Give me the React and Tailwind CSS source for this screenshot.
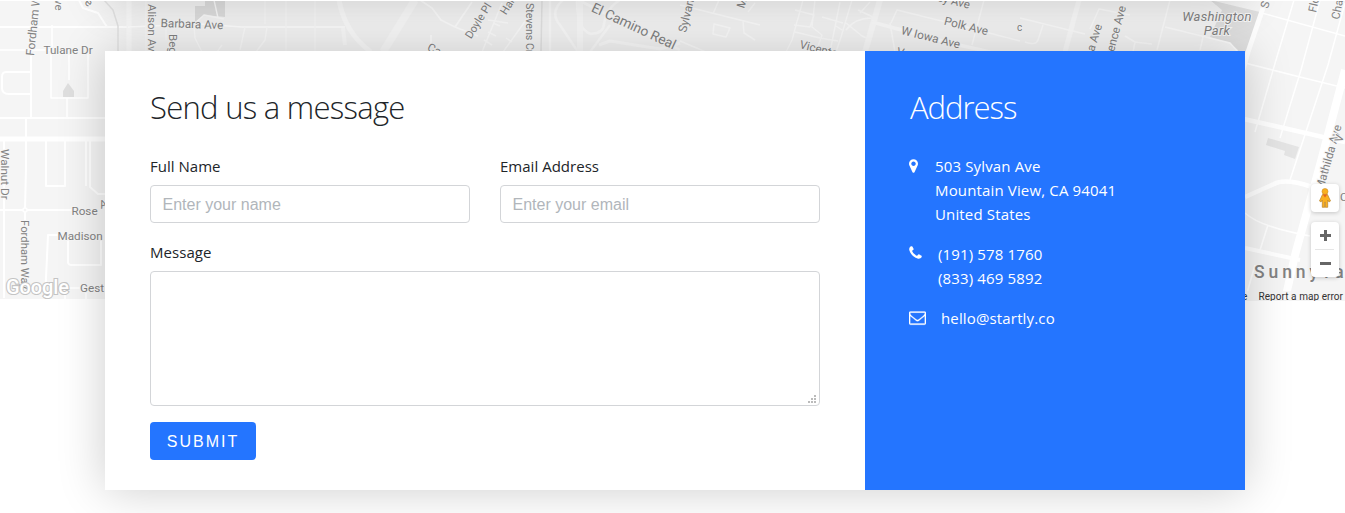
import React from "react";

const roads = [
  // west side
  ["M-2 27H128", 2, "#fff"],
  ["M0 118H105", 2, "#fff"],
  ["M0 139H108", 5, "#fff"],
  ["M0 210H72", 2, "#fff"],
  ["M0 300H105", 2, "#fff"],
  ["M31 50V117", 2, "#fff"],
  ["M26 118V168L25 210V220", 2, "#fff"],
  ["M4 140V298", 2, "#fff"],
  ["M0 50H52V25", 1.5, "#fff"],
  ["M30 72H6Q2 72 2 77V88Q2 94 9 94H30", 2, "#fff"],
  ["M51 50V98H88V50M69 50V80M67 98V118", 1.5, "#fff"],
  ["M46 140V186H65V140", 2, "#fff"],
  ["M86 140V186M90 140V187L98 194H105", 2, "#fff"],
  ["M62 235H48L45 300M68 240V262Q68 265 72 265H101V240", 2, "#fff"],
  ["M60 288H80M65 288V300M86 290V300", 1.5, "#fff"],
  ["M79 0L83 8L98 13L107 27", 2, "#fff"],
  ["M104 0L113 10L118 26V52", 1.5, "#e2e2e2"],
  ["M129 0V52", 5, "#fafafa"],
  ["M128 27L200 24L242 27H345", 1.4, "#fff"],
  ["M146 0V52M166 27V40M286 0V52M315 0V52M265 0V24", 1.4, "#f9f9f9"],
  ["M194 24L204 15L224 19M214 0L218 18M194 26L195 38L202 52M245 27L240 50M267 27L265 40L256 52M222 45L217 52", 1.4, "#fbfbfb"],
  // centre
  ["M339 0Q345 33 371 52", 5, "#fbfbfb"],
  ["M415 0L383 52", 8, "#fafafa"],
  ["M343 28L345 45", 4, "#fafafa"],
  ["M420 0L432 8L441 20L455 27L478 36M455 27L472 2M431 35V44L440 52", 1.8, "#fdfdfd"],
  ["M502 3L482 52M488 20L508 23M526 20L503 52M493 23L500 26M488 32L496 36M484 40L492 45M512 42L506 38", 1.5, "#fcfcfc"],
  ["M542 0L541 52", 1.5, "#e3e3e3"],
  ["M563 0Q549 12 560 25L578 52M620 0Q606 8 604 24Q604 33 591 34Q577 30 577 0M610 25L590 52M550 0V52", 2.5, "#fbfbfb"],
  ["M580 0V52", 6, "#fafafa"],
  ["M578 0L680 50M599 45L610 41L660 49L680 43", 3, "#fbfbfb"],
  ["M680 5L760 25M719 0L713 14M743 21L744 33L755 40M755 3L748 12M680 41L706 52M714 24L730 28L726 37L713 34Z", 1.5, "#fcfcfc"],
  ["M803 0L792 40L786 52M795 10L814 15L810 27L794 25M815 0L812 27L822 35L816 52M795 32L820 38L838 41M840 2L830 52M852 0L841 37L836 52M822 17L843 23M836 26L842 30", 1.4, "#fcfcfc"],
  ["M846 23L862 36L871 40M846 30Q855 18 872 18M858 10L875 18M860 13L870 2", 1.6, "#fcfcfc"],
  ["M880 0L865 52", 6, "#fbfbfb"],
  ["M872 22L950 43L990 52", 3.5, "#fcfcfc"],
  ["M891 23L897 10L970 28L1020 41M984 0L972 45M890 23L895 52", 1.5, "#fcfcfc"],
  // east
  ["M1079 0L1065 52", 5, "#fbfbfb"],
  ["M1020 18L1085 34M1043 25L1038 40Q1036 46 1025 42", 1.5, "#fcfcfc"],
  ["M1090 29L1099 9L1130 15M1125 36L1135 42L1133 52M1170 0L1157 50M1165 27L1230 43L1238 52M1203 37L1200 50M1134 42L1152 44", 1.5, "#fcfcfc"],
  ["M1263 8L1248 52L1235 98", 5, "#fff"],
  ["M1262 13L1345 36M1294 0L1276 60L1255 132M1320 0L1301 70L1280 138M1345 3L1328 65L1290 180", 1.5, "#fff"],
  ["M1245 63L1300 77L1345 88", 1.6, "#fff"],
  ["M1235 117L1288 129L1345 142", 4.5, "#fff"],
  ["M1245 197L1274 184Q1285 178 1312 187", 4.5, "#fff"],
  ["M1245 213Q1260 227 1310 236M1268 225L1260 250M1255 265L1245 300", 1.6, "#fff"],
  ["M1245 248L1300 260", 4, "#fff"],
  ["M1345 70L1320 165L1295 255L1285 300", 8, "#fff"],
];

const labels = [
  ["Fordham W", 34, 56, -84, 11.7],
  ["ve", 55, -1, 90, 11.5],
  ["e", 84, 3, 45, 11.5],
  ["Tulane Dr", 43.5, 53.5, 0, 11.7],
  ["Alison Av", 148, 4, 90, 11.5],
  ["Barbara Ave", 160.5, 27, 2, 11.7],
  ["Beg", 169, 34, 90, 11.5],
  ["Walnut Dr", 0.5, 149, 90, 11.7],
  ["Rose", 71.5, 214.5, 0, 11.7],
  ["A", 101, 209, -20, 11.5],
  ["Fordham Way", 21, 220, 90, 11.3],
  ["Madison", 57.5, 239.5, 0, 11.7],
  ["Gest", 80, 292, 0, 11.7],
  ["Doyle Pl", 471, 39.5, -58, 11],
  ["Harr", 506, 15.5, -58, 11],
  ["Ca", 426.5, 50, 25, 11.5],
  ["Stevens Cr", 526, 3, 90, 10.6],
  ["El Camino Real", 590.5, 11, 25, 13.7],
  ["Sylvan", 686, 33, -76, 11.7],
  ["M", 744, 9, -72, 11.5],
  ["c", 1017, 31, 0, 10],
  ["Vicente", 799, 48, 14, 11.5],
  ["ley Ave", 934, 0, 14, 11.5],
  ["Polk Ave", 943.5, 24.500, 14, 11.7],
  ["W Iowa Ave", 900.5, 34, 14, 11.7],
  ["V", 896, 55, 14, 11.5],
  ["a Ave", 1094, 52, -73, 11.5],
  ["rence Ave", 1113, 56, -75, 11.7],
  ["S", 1268, 9, -75, 11.5],
  ["Flo", 1316, 13, -78, 11.5],
  ["Char", 1339, 20, -78, 11.5],
  ["Mathilda Ave", 1323, 191, -74, 11.7],
  ["V", 1342, 143, -74, 11.5],
  ["C", 1340, 201, 0, 11.5],
];

function StreetMap() {
  return (
    <svg className="block" width="1345" height="300" viewBox="0 1 1345 300">
      <rect width="1345" height="301" fill="#f5f5f5" />
      <path d="M195 0H225V17L205 15L195 22V6H205V0Z" fill="#dfdfdf" />
      <path d="M1210 0L1260 12L1247 60H1225L1238 50L1230 43L1210 37L1222 10Z" fill="#e0e0e0" />
      <path d="M63 97V91L68 83L74 91V97Z" fill="#dfdfdf" />
      <path d="M1268 138L1299 147L1295 159L1284 155L1285 151L1266 145Z" fill="#e4e4e4" />
      <g fill="none" strokeLinejoin="round">
        {roads.map(([d, w, c], i) => (
          <path key={i} d={d} strokeWidth={w} stroke={c} />
        ))}
        <circle cx="25" cy="210" r="2" fill="#f5f5f5" stroke="#fff" strokeWidth="1.5" />
      </g>
      <g
        className="font-['Roboto',sans-serif]"
        fill="#828282"
        stroke="#f7f7f7"
        strokeWidth="2"
        paintOrder="stroke"
      >
        {labels.map(([t, x, y, r, s], i) => (
          <text key={i} fontSize={s} transform={`translate(${x} ${y}) rotate(${r})`}>
            {t}
          </text>
        ))}
        <g fontStyle="italic" fontSize="13" textAnchor="middle" letterSpacing="0.3">
          <text x="1217" y="21">Washington</text>
          <text x="1217" y="35">Park</text>
        </g>
        <text x="1254" y="278" fontSize="17.500" letterSpacing="3.900" fontWeight="500">
          Sunnyvale
        </text>
      </g>
      <rect x="1180" y="291" width="165" height="10" fill="#f5f5f5" fillOpacity="0.7" />
      <g className="font-['Roboto',sans-serif]" fontSize="10" fill="#333">
        <text x="1242" y="300">e</text>
        <text x="1258.500" y="300" textLength="84.500">
          Report a map error
        </text>
      </g>
      <text
        className="font-['Roboto',sans-serif]"
        x="6"
        y="294"
        fontSize="20"
        fontWeight="500"
        textLength="63"
        fill="#fff"
        stroke="#c4c4c4"
        strokeWidth="2.200"
        paintOrder="stroke"
      >
        Google
      </text>
    </svg>
  );
}

function MapControls() {
  return (
    <div className="absolute left-[1311px] top-[183px] flex w-7 flex-col gap-[10px]">
      <div className="flex h-7 items-center justify-center rounded-sm bg-white shadow-[0_1px_4px_rgba(0,0,0,0.2)]">
        <svg width="14" height="20" viewBox="0 0 14 20">
          <path
            d="M4.500 6.500H9.500L12.500 13L11 14L9.700 12V19.300H7.300V14H6.700V19.300H4.300V12L3 14L1.500 13Z"
            fill="#fbb01f"
            stroke="#b9832a"
            strokeWidth="0.7"
          />
          <circle cx="7" cy="3.500" r="3" fill="#fbb01f" stroke="#c98f2d" strokeWidth="0.6" />
          <path d="M4.800 6.400H9.200L7 9.500Z" fill="#e9631a" />
        </svg>
      </div>
      <div className="flex h-[55px] flex-col items-center rounded-sm bg-white shadow-[0_1px_4px_rgba(0,0,0,0.2)]">
        <svg width="28" height="55" viewBox="0 0 28 55">
          <path d="M9 13.500H20M14.500 8V19M9 41.500H20" stroke="#666" strokeWidth="3" />
          <path d="M4 27.500H23" stroke="#e6e6e6" />
        </svg>
      </div>
    </div>
  );
}

function PinIcon() {
  return (
    <svg className="mt-1 block h-4 w-[9px] shrink-0" viewBox="0 0 1024 1792" fill="currentColor">
      <path d="M768 640q0-106-75-181t-181-75-181 75-75 181 75 181 181 75 181-75 75-181zm256 0q0 109-33 179l-364 774q-16 33-47.500 52t-67.500 19-67.500-19-46.500-52l-365-774q-33-70-33-179 0-212 150-362t362-150 362 150 150 362z" />
    </svg>
  );
}

function PhoneIcon() {
  return (
    <svg className="mt-[3px] block h-4 w-[13px] shrink-0" viewBox="0 0 1408 1792" fill="currentColor">
      <path d="M1408 1240q0 27-10 70.500t-21 68.500q-21 50-122 106-94 51-186 51-27 0-53-3.500t-57.500-12.500-47-14.500-55.500-20.500-49-18q-98-35-175-83-127-79-264-216t-216-264q-48-77-83-175-3-9-18-49t-20.500-55.500-14.500-47-12.500-57.500-3.500-53q0-92 51-186 56-101 106-122 25-11 68.500-21t70.500-10q14 0 21 3 18 6 53 76 11 19 30 54t35 63.500 31 53.500q3 4 17.500 25t21.500 35.500 7 28.500q0 20-28.500 50t-62 55-62 53-28.500 46q0 9 5 22.500t8.500 20.500 14 24 11.500 19q76 137 174 235t235 174q2 1 19 11.500t24 14 20.500 8.500 22.500 5q18 0 46-28.500t53-62 55-62 50-28.500q14 0 28.500 7t35.500 21.500 25 17.500q25 15 53.500 31t63.500 35 54 30q70 35 76 53 3 7 3 21z" />
    </svg>
  );
}

function EnvelopeIcon() {
  return (
    <svg className="mt-[3px] block h-[17px] w-[17px] shrink-0" viewBox="0 0 1792 1792" fill="currentColor" stroke="currentColor" strokeWidth="25">
      <path d="M1664 1504v-768q-32 36-69 66-268 206-426 338-51 43-83 67t-86.500 48.500-102.500 24.500h-2q-48 0-102.500-24.500t-86.500-48.500-83-67q-158-132-426-338-37-30-69-66v768q0 13 9.500 22.500t22.500 9.500h1472q13 0 22.500-9.500t9.500-22.500zm0-1051v-24.500l-.5-13-3-12.500-5.500-9-9-7.500-14-2.500h-1472q-13 0-22.500 9.500t-9.500 22.500q0 168 147 284 193 152 401 317 6 5 35 29.500t46 37.500 44.500 31.500 50.500 27.500 43 9h2q20 0 43-9t50.500-27.500 44.500-31.500 46-37.500 35-29.500q208-165 401-317 54-43 100.500-115.500t46.500-131.500zm128-37v1088q0 66-47 113t-113 47h-1472q-66 0-113-47t-47-113v-1088q0-66 47-113t113-47h1472q66 0 113 47t47 113z" />
    </svg>
  );
}

function Field({ label, placeholder }) {
  return (
    <label className="block w-80">
      <span className="block h-6 leading-6 tracking-[0.02px]">{label}</span>
      <input
        className="mt-[7px] block h-[38px] w-full rounded border border-[#d3d5d8] bg-white pl-[11.5px] pr-3 pt-[2px] font-['Liberation_Sans',sans-serif] text-base placeholder:text-[#b1b6bb]"
        placeholder={placeholder}
      />
    </label>
  );
}

export default function App() {
  return (
    <div className="relative h-[513px] w-[1345px] overflow-hidden bg-white font-['Open_Sans',sans-serif] text-[15px] text-[#212529]">
      <div className="absolute left-0 top-px h-[300px] w-full overflow-hidden">
        <StreetMap />
        <div className="absolute -top-10 left-[105px] h-10 w-[1140px] shadow-[0_0_45px_rgba(0,0,0,0.2)]" />
        <MapControls />
      </div>

      <div className="relative ml-[105px] mt-[51px] flex h-[439px] w-[1140px] bg-white shadow-[0_0_45px_rgba(0,0,0,0.2)]">
        <form className="w-[760px] px-[45px] pt-9">
          <h2 className="h-10 whitespace-nowrap text-[31px] font-light leading-10 tracking-[-0.72px]">Send us a message</h2>
          <div className="mt-[27px] flex justify-between">
            <Field label="Full Name" placeholder="Enter your name" />
            <Field label="Email Address" placeholder="Enter your email" />
          </div>
          <label className="relative mt-[17px] block">
            <span className="block h-6 leading-6 tracking-[0.05px]">Message</span>
            <textarea className="mt-[7px] block h-[135px] w-full resize-none rounded border border-[#d3d5d8] bg-white" />
            <svg className="absolute bottom-[3px] right-1" width="8" height="8" fill="#bbb">
              <path d="M0 6h2v2H0zM3 6h2v2H3zM6 6h2v2H6zM3 3h2v2H3zM6 3h2v2H6zM6 0h2v2H6z" />
            </svg>
          </label>
          <button
            type="button"
            className="mt-4 block h-[38px] w-[106px] rounded bg-[#2475ff] pt-[2px] font-['Liberation_Sans',sans-serif] text-base tracking-[2px] text-white"
          >
            SUBMIT
          </button>
        </form>

        <aside className="w-[380px] bg-[#2475ff] pl-11 pt-9 text-white">
          <h2 className="h-10 pl-px text-[31px] font-light leading-10 tracking-[-1px]">Address</h2>
          <div className="mt-[27px] flex flex-col gap-4 leading-6 tracking-[0.15px]">
            <div className="flex gap-[17px]">
              <PinIcon />
              <p>
                503 Sylvan Ave
                <br />
                Mountain View, CA 94041
                <br />
                United States
              </p>
            </div>
            <div className="flex gap-4">
              <PhoneIcon />
              <p>
                (191) 578 1760
                <br />
                (833) 469 5892
              </p>
            </div>
            <div className="flex gap-[15px]">
              <EnvelopeIcon />
              <p>hello@startly.co</p>
            </div>
          </div>
        </aside>
      </div>
    </div>
  );
}
